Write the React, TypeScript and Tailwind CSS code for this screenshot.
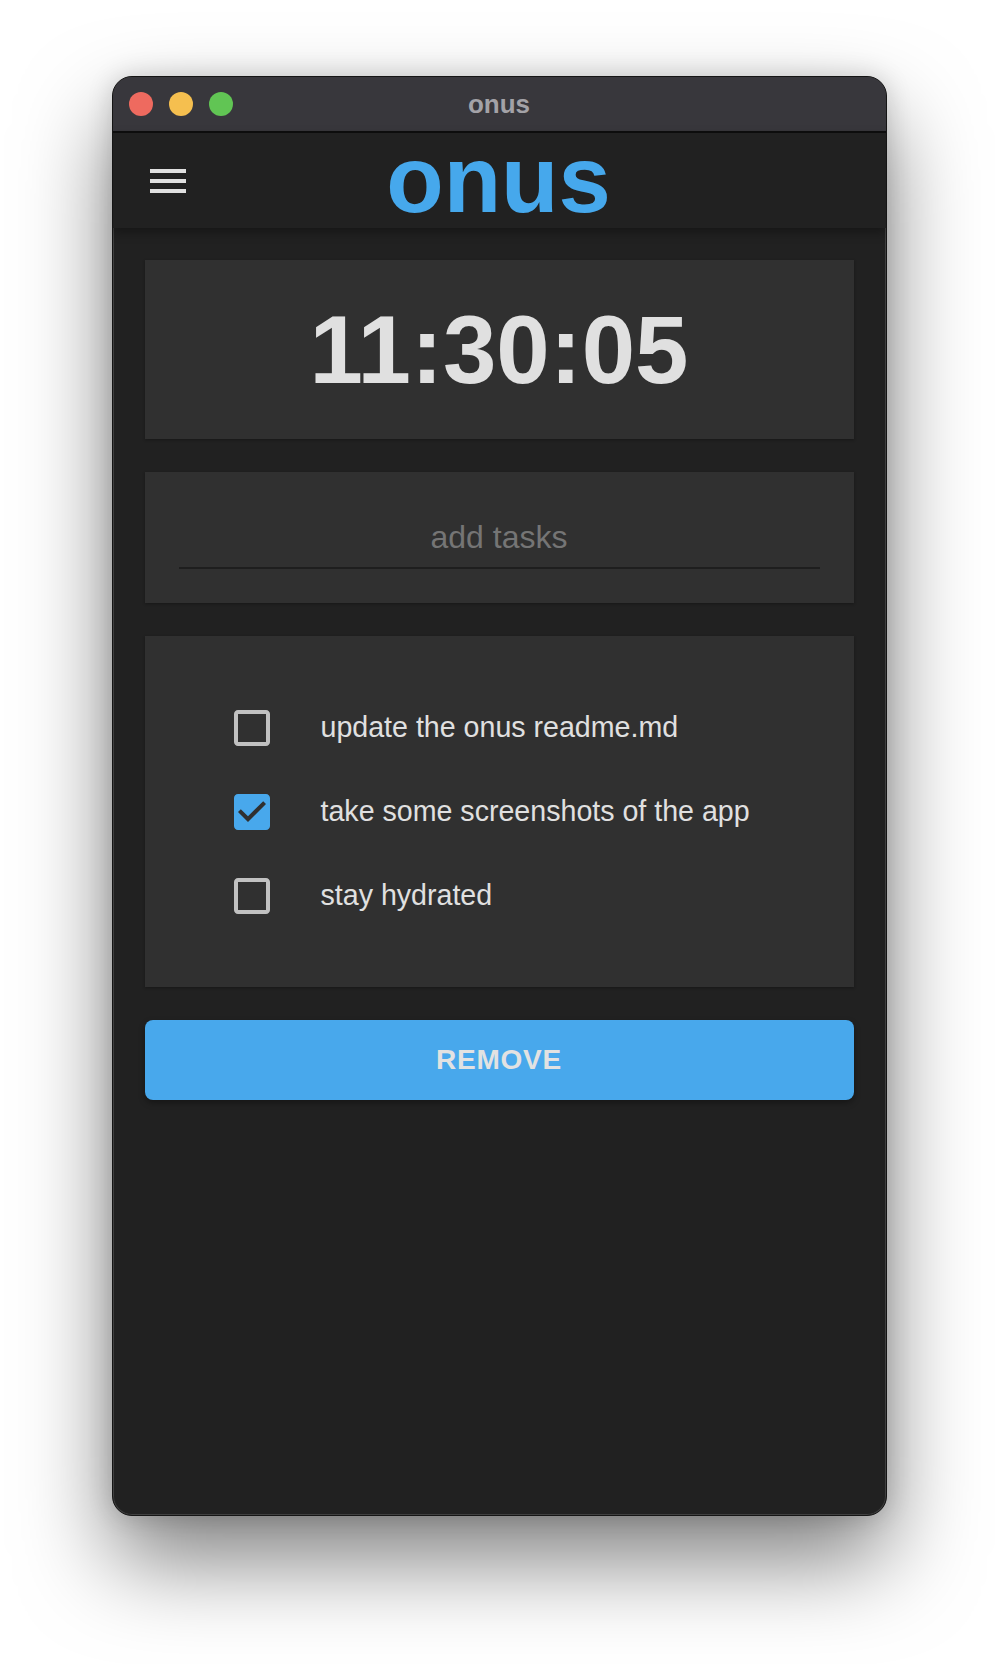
import React from "react";

function MenuIcon() {
  return (
    <svg width="48" height="48" viewBox="0 0 24 24" fill="#e0e0e0">
      <path d="M3 18h18v-2H3v2zm0-5h18v-2H3v2zm0-7v2h18V6H3z" />
    </svg>
  );
}

function CheckBox({ checked }: { checked: boolean }) {
  if (checked) {
    return (
      <svg width="48" height="48" viewBox="0 0 24 24" className="shrink-0">
        <path
          fill="#48a8ec"
          d="M19 3H5c-1.11 0-2 .9-2 2v14c0 1.1.89 2 2 2h14c1.11 0 2-.9 2-2V5c0-1.1-.89-2-2-2zm-9 14l-5-5 1.41-1.41L10 14.17l7.59-7.59L19 8l-9 9z"
        />
      </svg>
    );
  }
  return (
    <svg width="48" height="48" viewBox="0 0 24 24" className="shrink-0">
      <path
        fill="#c1c1c1"
        d="M19 5v14H5V5h14m0-2H5c-1.1 0-2 .9-2 2v14c0 1.1.9 2 2 2h14c1.1 0 2-.9 2-2V5c0-1.1-.9-2-2-2z"
      />
    </svg>
  );
}

const tasks = [
  { text: "update the onus readme.md", done: false },
  { text: "take some screenshots of the app", done: true },
  { text: "stay hydrated", done: false },
];

export default function App() {
  return (
    <div className="min-h-[1664px] bg-white pt-[76px] font-['Liberation_Sans',Arial,sans-serif]">
      <div className="mx-auto flex h-[1440px] w-[775px] flex-col overflow-hidden rounded-[20px] border border-[#151515] bg-[#212121] shadow-[inset_0_0_0_1px_rgba(255,255,255,0.14),0_44px_90px_rgba(0,0,0,0.5),0_0_26px_rgba(0,0,0,0.16)]">
        {/* title bar */}
        <div className="grid h-[56px] shrink-0 grid-cols-[1fr_auto_1fr] items-center border-b-[2px] border-[#0e0e0e] bg-[#38373c] px-[16px]">
          <div className="flex items-center gap-[16px]">
            <span className="h-[24px] w-[24px] rounded-full bg-[#ee6a5f]" />
            <span className="h-[24px] w-[24px] rounded-full bg-[#f5bf4f]" />
            <span className="h-[24px] w-[24px] rounded-full bg-[#61c554]" />
          </div>
          <div className="text-[26px] font-bold text-[#a3a2a7]">onus</div>
          <div />
        </div>

        {/* app bar */}
        <div className="relative z-10 grid h-[95px] shrink-0 grid-cols-[1fr_auto_1fr] items-center bg-[#212121] pl-[31px] pr-[32px] shadow-[0_4px_10px_rgba(0,0,0,0.35)]">
          <div className="flex items-center">
            <MenuIcon />
          </div>
          <div className="mb-[2px] text-[94px] font-bold leading-[88px] text-[#46a8ec]">
            onus
          </div>
          <div />
        </div>

        {/* content */}
        <div className="flex flex-col gap-[33px] px-[32px] pt-[32px]">
          <div className="flex h-[179px] items-center justify-center bg-[#303030] shadow-[0_1px_3px_rgba(0,0,0,0.3)]">
            <span className="text-[96px] font-bold leading-none text-[#e0e0e0]">
              11:30:05
            </span>
          </div>

          <div className="h-[131px] bg-[#303030] pt-[47px] shadow-[0_1px_3px_rgba(0,0,0,0.3)]">
            <div className="mx-[34px] border-b-2 border-[#1e1e1e] pb-[11px] text-center text-[32px] leading-[37px] text-[#757575]">
              add tasks
            </div>
          </div>

          <div className="flex h-[351px] flex-col justify-center bg-[#303030] shadow-[0_1px_3px_rgba(0,0,0,0.3)]">
            {tasks.map((t) => (
              <div key={t.text} className="flex h-[84px] items-center gap-[45px] pl-[83px]">
                <CheckBox checked={t.done} />
                <span className="text-[28.6px] leading-none text-[#e0e0e0]">{t.text}</span>
              </div>
            ))}
          </div>

          <button className="flex h-[80px] items-center justify-center rounded-[8px] bg-[#48a8ec] text-[28px] font-bold tracking-[0.8px] text-[#e2e2e2] shadow-[0_3px_6px_rgba(0,0,0,0.35)]">
            REMOVE
          </button>
        </div>
      </div>
    </div>
  );
}
